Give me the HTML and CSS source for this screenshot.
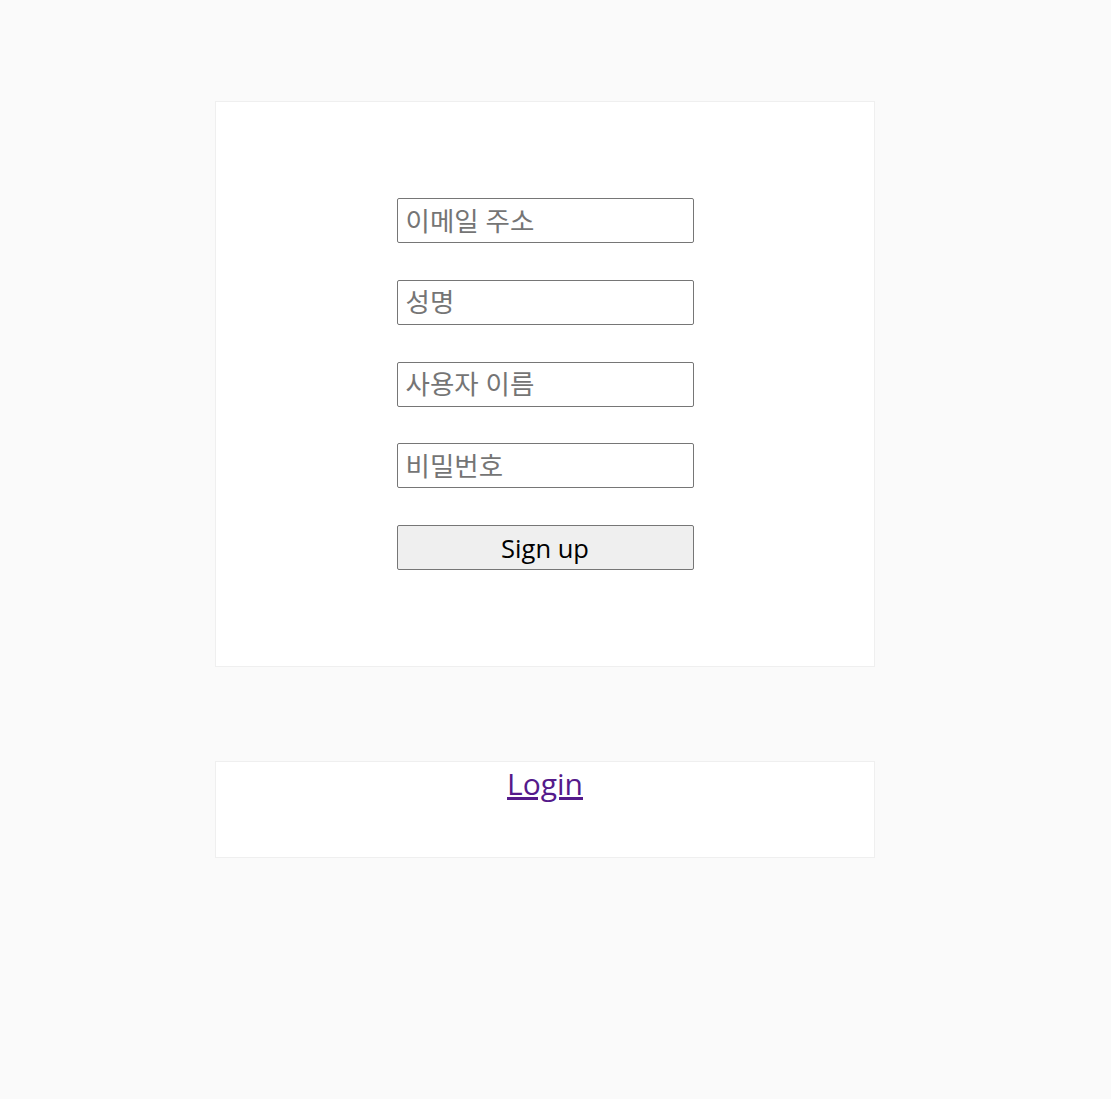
FILE: index.html
```html
<!DOCTYPE html>
<html lang="ko">
<head>
<meta charset="utf-8">
<link rel="stylesheet" href="styles.css">
</head>
<body>
<div class="page">
  <div class="card signup">
    <form class="form">
      <input class="field" type="text" placeholder="이메일 주소">
      <input class="field" type="text" placeholder="성명">
      <input class="field" type="text" placeholder="사용자 이름">
      <input class="field" type="password" placeholder="비밀번호">
      <button class="btn" type="button">Sign up</button>
    </form>
  </div>
  <div class="card login">
    <a class="login-link" href="#">Login</a>
  </div>
</div>
</body>
</html>
```
FILE: styles.css
```css
html, body {
  margin: 0;
  padding: 0;
  background: #fafafa;
}
body {
  font-family: "Open Sans", "Noto Sans CJK KR", sans-serif;
}
.page {
  width: 660px;
  margin-left: 215px;
  padding-top: 101px;
  display: flex;
  flex-direction: column;
  gap: 94px;
}
.card {
  background: #fff;
  border: 1px solid #efefef;
  box-sizing: border-box;
}
.signup {
  height: 566px;
  display: flex;
  align-items: center;
  justify-content: center;
}
.form {
  display: flex;
  flex-direction: column;
  gap: 36.75px;
  width: 297px;
}
.field {
  box-sizing: border-box;
  height: 45px;
  width: 297px;
  border: 1px solid #767676;
  border-radius: 2px;
  padding: 0 8px;
  font-family: "Open Sans", "Noto Sans CJK KR", sans-serif;
  font-size: 26.5px;
  color: #000;
  background: #fff;
}
.field::placeholder {
  color: #757575;
}
.btn {
  box-sizing: border-box;
  height: 45px;
  width: 297px;
  border: 1px solid #767676;
  border-radius: 2px;
  background: #efefef;
  font-family: "Open Sans", "Noto Sans CJK KR", sans-serif;
  font-size: 25.5px;
  color: #000;
  padding: 0;
}
.login {
  height: 97px;
  text-align: center;
  padding-top: 2px;
}
.login-link {
  font-size: 30px;
  color: #551a8b;
  text-decoration: underline;
  line-height: 40px;
}
```
